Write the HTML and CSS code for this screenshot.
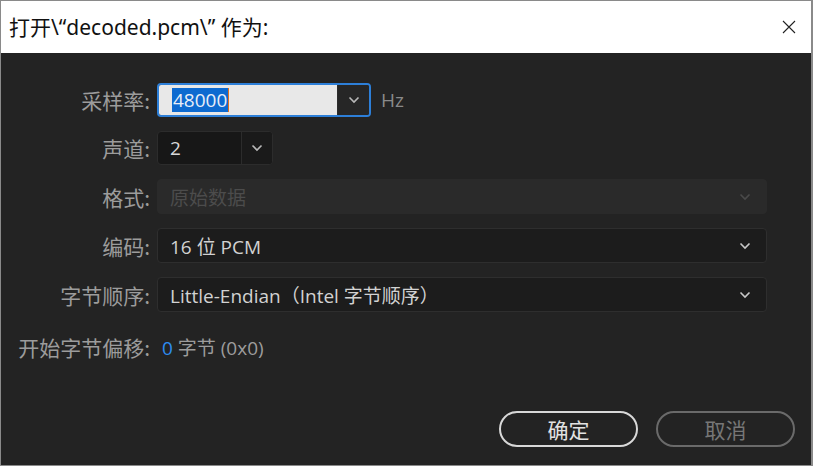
FILE: index.html
```html
<!DOCTYPE html>
<html lang="zh">
<head>
<meta charset="utf-8">
<link rel="stylesheet" href="styles.css">
</head>
<body>
<div class="window">
  <div class="titlebar">
    <span class="title">打开\“decoded.pcm\” 作为:</span>
    <svg class="close" width="14" height="14" viewBox="0 0 14 14"><path d="M1 1L13 13M13 1L1 13" stroke="#222" stroke-width="1.1" fill="none"/></svg>
  </div>
  <div class="body">
    <div class="form">
      <label class="lbl">采样率:</label>
      <div class="row">
        <div class="combo rate">
          <div class="combo-text light"><span class="sel">48000</span><span class="caret"></span></div>
          <div class="combo-btn"><svg width="12" height="8" viewBox="0 0 12 8"><path d="M1.5 1.5L6 6L10.5 1.5" stroke="#b8b8b8" stroke-width="1.6" fill="none"/></svg></div>
        </div>
        <span class="unit">Hz</span>
      </div>

      <label class="lbl">声道:</label>
      <div class="row">
        <div class="combo chan">
          <div class="combo-text">2</div>
          <div class="combo-btn"><svg width="12" height="8" viewBox="0 0 12 8"><path d="M1.5 1.5L6 6L10.5 1.5" stroke="#b8b8b8" stroke-width="1.6" fill="none"/></svg></div>
        </div>
      </div>

      <label class="lbl">格式:</label>
      <div class="select disabled">
        <span>原始数据</span>
        <svg width="12" height="8" viewBox="0 0 12 8"><path d="M1.5 1.5L6 6L10.5 1.5" stroke="#4a4a4a" stroke-width="1.6" fill="none"/></svg>
      </div>

      <label class="lbl">编码:</label>
      <div class="select">
        <span>16 位 PCM</span>
        <svg width="12" height="8" viewBox="0 0 12 8"><path d="M1.5 1.5L6 6L10.5 1.5" stroke="#c8c8c8" stroke-width="1.6" fill="none"/></svg>
      </div>

      <label class="lbl">字节顺序:</label>
      <div class="select">
        <span>Little-Endian（Intel 字节顺序）</span>
        <svg width="12" height="8" viewBox="0 0 12 8"><path d="M1.5 1.5L6 6L10.5 1.5" stroke="#c8c8c8" stroke-width="1.6" fill="none"/></svg>
      </div>

      <label class="lbl offset-lbl">开始字节偏移:</label>
      <div class="offset"><span class="num">0</span> 字节 (0x0)</div>
    </div>
    <div class="buttons">
      <button class="btn ok">确定</button>
      <button class="btn cancel">取消</button>
    </div>
  </div>
</div>
</body>
</html>
```
FILE: styles.css
```css
* { box-sizing: border-box; }
html, body { margin: 0; padding: 0; }
body {
  width: 813px;
  height: 466px;
  overflow: hidden;
  font-family: "Noto Sans CJK SC", "Noto Sans", sans-serif;
}
.window {
  width: 813px;
  height: 466px;
  border: 1px solid #8a8a8a;
  border-right-width: 2px;
  display: flex;
  flex-direction: column;
  background: #232323;
}
.titlebar {
  height: 52px;
  background: #fff;
  display: flex;
  align-items: center;
  justify-content: space-between;
  padding: 0 14px 0 8px;
  flex: none;
}
.title {
  font-size: 21px;
  color: #111;
  font-family: "Noto Sans", "Noto Sans CJK SC", sans-serif;
  position: relative;
  top: -1px;
}
.close { margin-right: 1px; }
.body {
  flex: 1;
  display: flex;
  flex-direction: column;
  padding: 30px 44px 0 0;
}
.form {
  display: grid;
  grid-template-columns: 149px 1fr;
  column-gap: 7px;
  row-gap: 14px;
  align-items: center;
}
.lbl {
  text-align: right;
  color: #9c9c9c;
  font-size: 21px;
  line-height: 34px;
}
.row { display: flex; align-items: center; }
.combo {
  display: flex;
  height: 34px;
  border-radius: 4px;
  overflow: hidden;
}
.combo.rate {
  width: 214px;
  border: 2px solid #2d7fd8;
}
.combo.chan {
  width: 116px;
  border: 1px solid #2c2c2c;
  background: #171717;
}
.combo-text {
  flex: 1;
  display: flex;
  align-items: center;
  padding-left: 12px;
  font-size: 19px;
  color: #d8d8d8;
  font-family: "Open Sans", "Noto Sans CJK SC", sans-serif;
}
.combo-text.light { background: #e8e8e8; padding-left: 13px; }
.sel {
  background: #0d6ad0;
  color: #e8eef8;
  line-height: 24px;
  padding: 0 1px 0 1px;
}
.caret {
  width: 1px;
  height: 24px;
  background: #e07020;
}
.combo-btn {
  width: 32px;
  display: flex;
  align-items: center;
  justify-content: center;
  border-left: 1px solid #2c2c2c;
  background: #262626;
}
.chan .combo-btn { width: 31px; background: #1a1a1a; }
.unit {
  margin-left: 10px;
  color: #8a8a8a;
  font-size: 19px;
  font-family: "Open Sans", sans-serif;
}
.select {
  height: 35px;
  border: 1px solid #2e2e2e;
  border-radius: 4px;
  background: #1c1c1c;
  display: flex;
  align-items: center;
  justify-content: space-between;
  padding: 0 15px 0 12px;
  font-size: 19px;
  color: #d2d2d2;
  font-family: "Open Sans", "Noto Sans CJK SC", sans-serif;
}
.select.disabled {
  background: #2a2a2a;
  border-color: #2a2a2a;
  color: #4c4c4c;
}
.offset-lbl { margin-top: 4px; }
.offset {
  margin-top: 4px;
  padding-left: 5px;
  color: #9c9c9c;
  font-size: 19px;
  font-family: "Open Sans", "Noto Sans CJK SC", sans-serif;
}
.offset .num { color: #2d8cf0; }
.buttons {
  margin-top: auto;
  margin-bottom: 18px;
  display: flex;
  justify-content: flex-end;
  gap: 18px;
  margin-right: -28px;
}
.btn {
  width: 139px;
  height: 36px;
  border-radius: 18px;
  background: transparent;
  font-size: 21px;
  font-family: "Noto Sans CJK SC", sans-serif;
  padding: 0;
  line-height: 30px;
}
.btn.ok { border: 2px solid #d8d8d8; color: #e2e2e2; }
.btn.cancel { border: 2px solid #6a6a6a; color: #777; }
```
